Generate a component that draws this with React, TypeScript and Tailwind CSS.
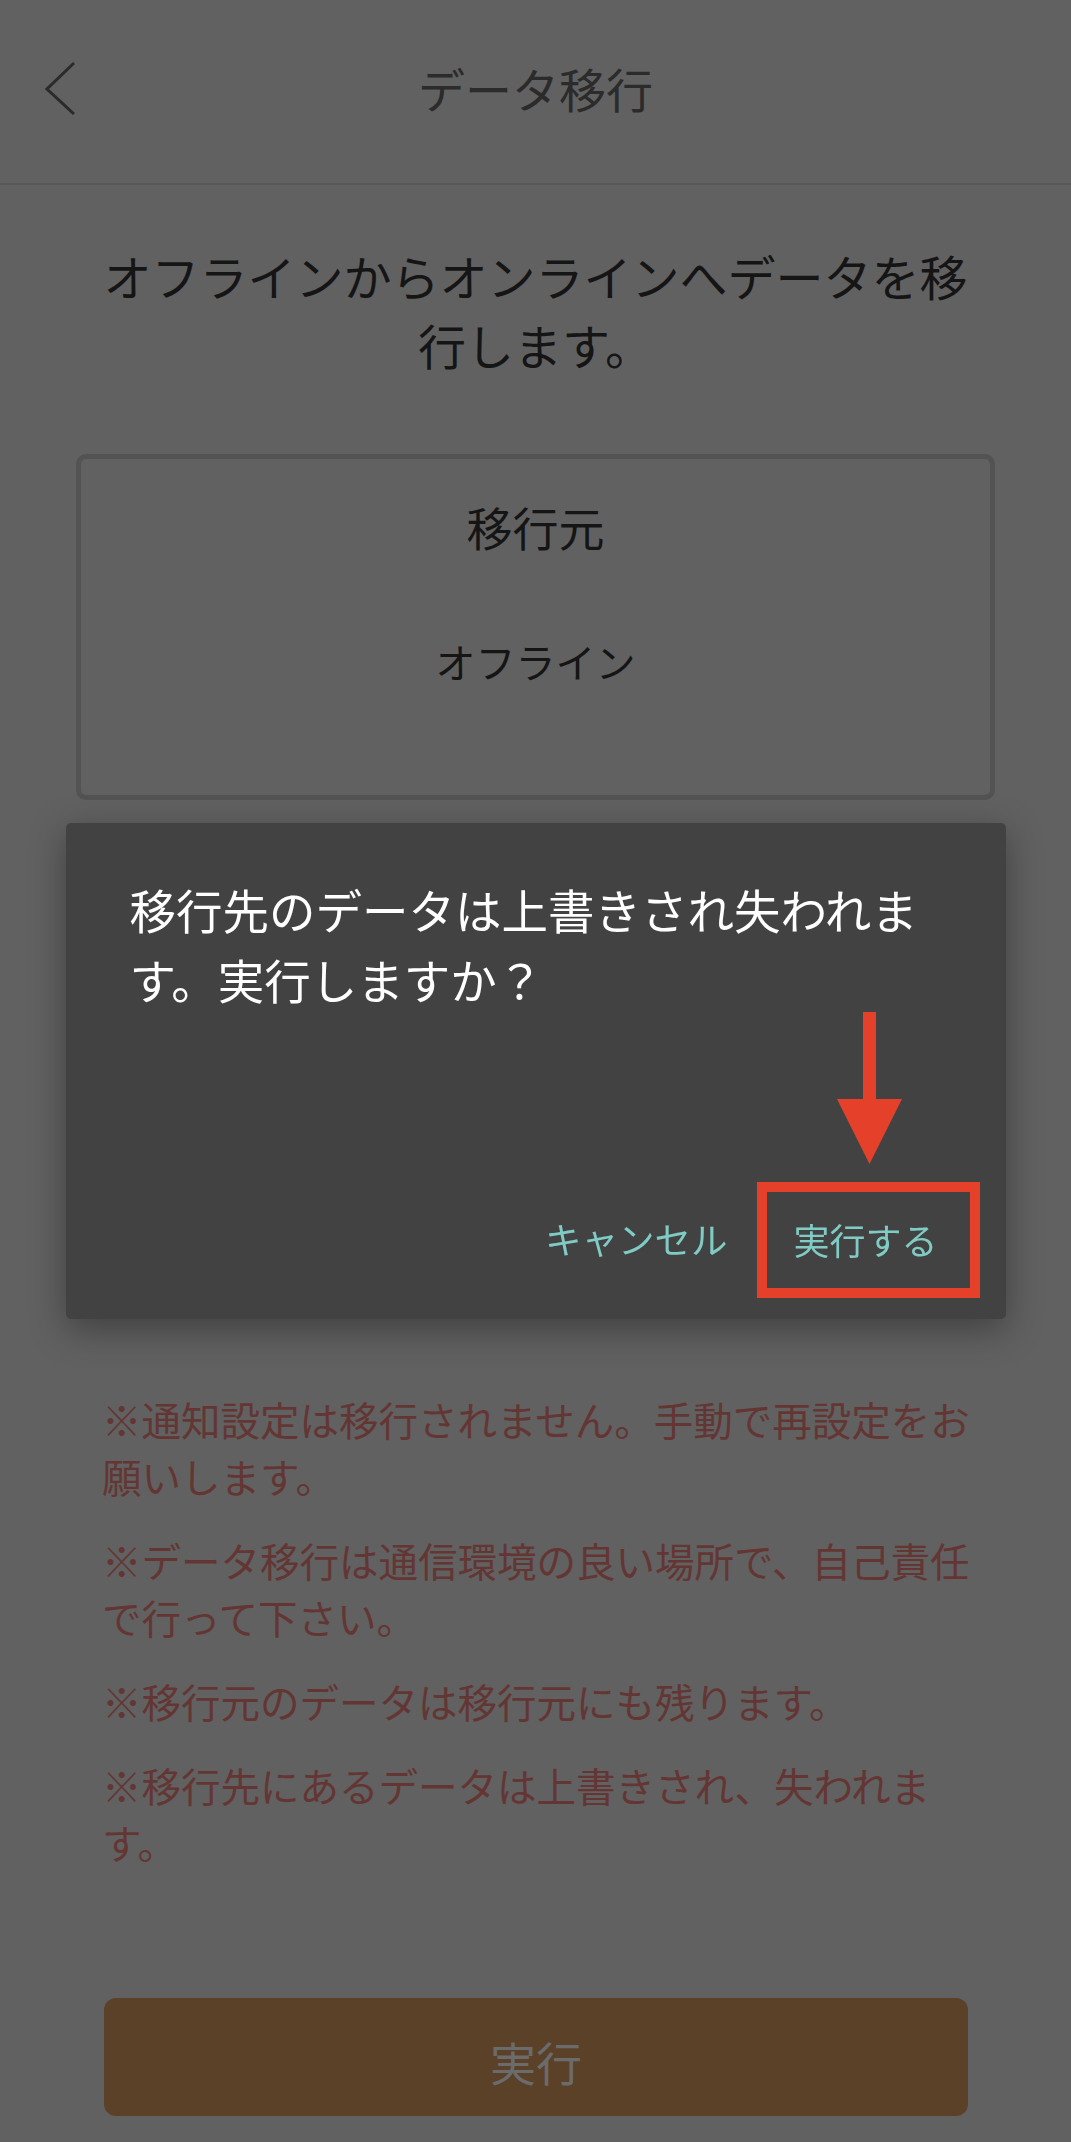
export default function App() {
  return (
    <div className="relative min-h-[2142px] bg-[#616161] font-['Noto_Sans_CJK_JP','Noto_Sans',sans-serif]">
      {/* ヘッダー */}
      <header className="grid h-[185px] grid-cols-[1fr_auto_1fr] items-center border-b-2 border-[#585858] pb-2">
        <button className="ml-[45px] w-[30px]">
          <svg width="30" height="54" viewBox="0 0 30 54" fill="none">
            <polyline points="29,2 2,28 29,53" stroke="#2b2b2b" strokeWidth="3" />
          </svg>
        </button>
        <h1 className="text-[47px] leading-[60px] text-[#2b2b2b]">データ移行</h1>
        <div />
      </header>

      <main className="px-[76px] pb-[26px]">
        <p className="mx-[26px] mt-[56px] text-center text-[48px] leading-[69px] text-[#151515]">
          オフラインからオンラインへデータを移行します。
        </p>

        {/* 移行元 */}
        <div className="mt-[75px] flex h-[346px] flex-col items-center rounded-[10px] border-[5px] border-[#535353] pt-[37px]">
          <div className="text-[46px] leading-[60px] text-[#151515]">移行元</div>
          <div className="mt-[77px] text-[40px] leading-[56px] text-[#151515]">オフライン</div>
        </div>

        {/* 注意事項 */}
        <div className="mt-[590px] space-y-[27px] pl-[26px] pr-[20px] text-[39.5px] leading-[57px] text-[#633634]">
          <p>※通知設定は移行されません。手動で再設定をお願いします。</p>
          <p>※データ移行は通信環境の良い場所で、自己責任で行って下さい。</p>
          <p>※移行元のデータは移行元にも残ります。</p>
          <p>※移行先にあるデータは上書きされ、失われます。</p>
        </div>

        <button className="mx-[28px] mt-[128px] flex h-[118px] w-[864px] items-center justify-center rounded-[12px] bg-[#5a4128] pt-2 text-[46px] text-[#6b6b6b]">
          実行
        </button>
      </main>

      {/* 確認ダイアログ */}
      <div className="fixed inset-0 flex items-center justify-center">
        <div className="relative w-[940px] rounded-[5px] bg-[#424242] shadow-[0_10px_36px_rgba(0,0,0,0.35)]">
          <p className="px-[64px] pt-[51px] text-[46.5px] leading-[70px] text-white">
            移行先のデータは上書きされ失われます。実行しますか？
          </p>
          <div className="mt-[185px] flex justify-end gap-[26px] pb-[40px] pr-[48px]">
            <button className="h-[80px] px-[20px] text-[36.5px] text-[#80cbc4]">キャンセル</button>
            <button className="h-[80px] px-[20px] text-[36px] text-[#80cbc4]">実行する</button>
          </div>

          {/* 赤い注釈 */}
          <svg className="absolute left-[771px] top-[189px]" width="65" height="152" viewBox="0 0 65 152">
            <rect x="26" y="0" width="13" height="88" fill="#e5412a" />
            <polygon points="0,87 65,87 32.5,152" fill="#e5412a" />
          </svg>
          <div className="absolute left-[691px] top-[359px] h-[116px] w-[223px] border-[10px] border-[#e5412a]" />
        </div>
      </div>
    </div>
  );
}
